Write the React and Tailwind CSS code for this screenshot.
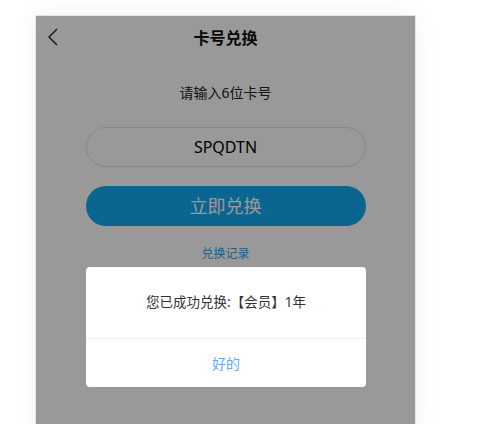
import React from 'react';

const font = { fontFamily: '"Noto Sans", "Noto Sans CJK SC", sans-serif' };

const BackIcon = () => (
    <svg width="12" height="18" viewBox="0 0 12 18" fill="none">
        <polyline points="10,1 2,9 10,17" stroke="#222" strokeWidth="1.4" fill="none" />
    </svg>
);

export default function App() {
    return (
        <div className="min-h-[424px] bg-white overflow-hidden" style={font}>
            <div className="relative ml-[35px] mt-[15px] w-[381px] h-[420px] bg-white border border-[#e6e6e6] shadow-[0_0_24px_rgba(0,0,0,0.06)]">
                {/* header */}
                <div className="relative h-[44px] flex items-center justify-center">
                    <button className="absolute left-[11px] top-[12px]">
                        <BackIcon />
                    </button>
                    <h1 className="text-[16px] font-bold text-[#111]">卡号兑换</h1>
                </div>

                {/* form */}
                <div className="flex flex-col items-center">
                    <p className="mt-[23px] text-[14px] leading-[20px] text-[#222]">请输入6位卡号</p>
                    <div className="mt-[24px] w-[280px] h-[40px] rounded-full border border-[#e2e2e2] flex items-center justify-center text-[16px] text-black">
                        SPQDTN
                    </div>
                    <button className="mt-[19px] w-[280px] h-[40px] rounded-full bg-[#11aaf0] text-white text-[18px]">
                        立即兑换
                    </button>
                    <a className="mt-[20px] text-[12px] leading-[16px] text-[#2f9fe8]">兑换记录</a>
                </div>

                {/* overlay */}
                <div className="absolute inset-0 bg-black/40" />

                {/* dialog */}
                <div className="absolute left-[50px] top-[251px] w-[280px] bg-white rounded-[4px] overflow-hidden">
                    <div className="h-[71px] flex items-center justify-center text-[13.5px] text-[#333]">
                        您已成功兑换:【会员】1年
                    </div>
                    <div className="h-[49px] border-t border-[#f0f0f0] flex items-center justify-center text-[14px] text-[#66aaea]">
                        好的
                    </div>
                </div>
            </div>
        </div>
    );
}
